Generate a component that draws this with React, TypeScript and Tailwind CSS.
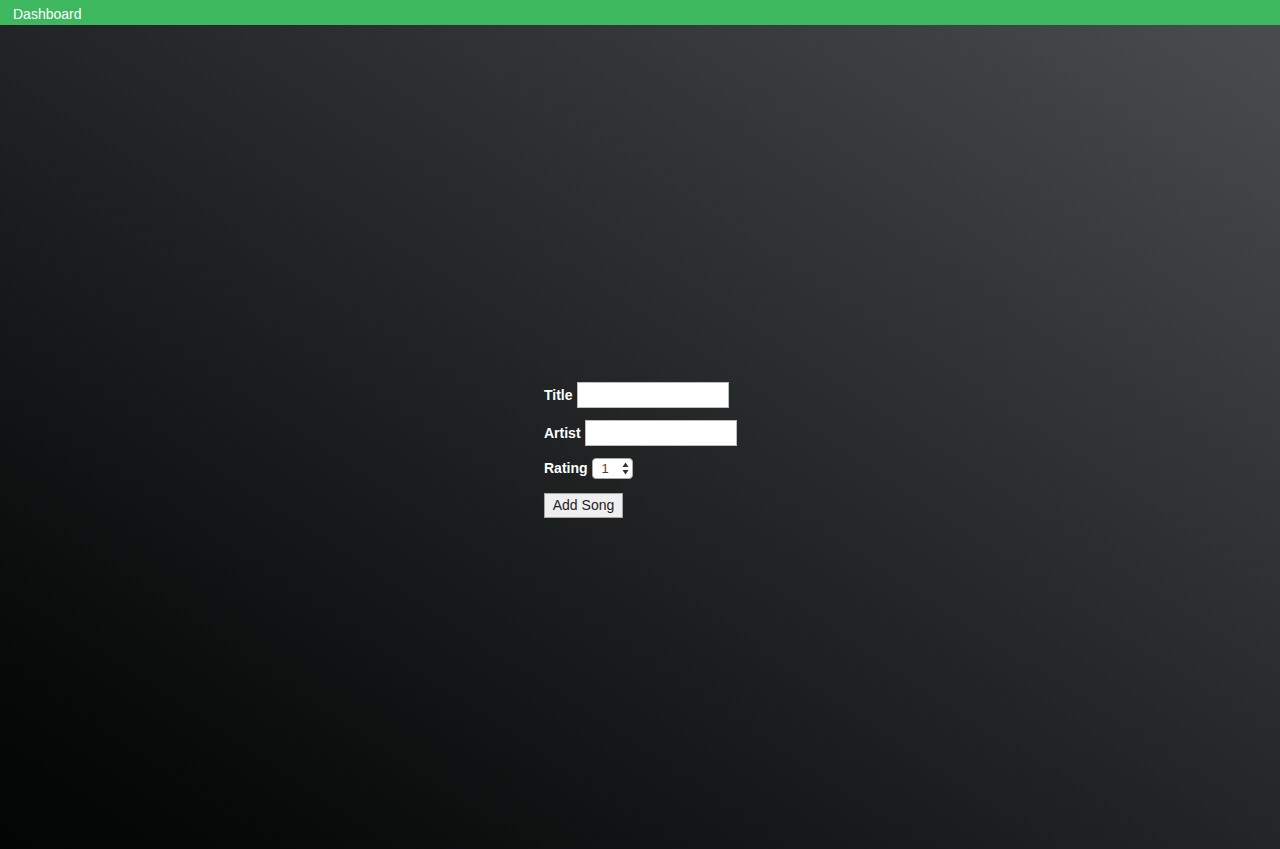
import { useState } from "react";

const App = () => {
  const [title, setTitle] = useState("");
  const [artist, setArtist] = useState("");
  const [rating, setRating] = useState("1");

  return (
    <div
      className="min-h-screen w-full bg-gradient-to-tr from-[#030404] to-[#4b4e50] text-white"
      style={{ fontFamily: '"Liberation Sans", Arial, sans-serif' }}
    >
      <nav className="h-[25px] bg-[#3db85f] px-[13px] text-[14px] leading-[28px] text-white">
        Dashboard
      </nav>

      <form
        className="mx-auto mt-[357px] flex w-[192px] flex-col"
        onSubmit={(e) => e.preventDefault()}
      >
        <div className="flex h-[26px] items-center gap-[4px]">
          <label className="text-[14px] font-bold">Title</label>
          <input
            value={title}
            onChange={(e) => setTitle(e.target.value)}
            type="text"
            className="h-[26px] w-[152px] border border-[#bdbdbd] bg-white px-1 text-[13px] text-black outline-none"
          />
        </div>
        <div className="mt-[12px] flex h-[26px] items-center gap-[4px]">
          <label className="text-[14px] font-bold">Artist</label>
          <input
            value={artist}
            onChange={(e) => setArtist(e.target.value)}
            type="text"
            className="h-[26px] w-[152px] border border-[#bdbdbd] bg-white px-1 text-[13px] text-black outline-none"
          />
        </div>
        <div className="mt-[12px] flex h-[21px] items-center gap-[4px]">
          <label className="text-[14px] font-bold">Rating</label>
          <div className="relative h-[21px] w-[41px]">
            <select
              value={rating}
              onChange={(e) => setRating(e.target.value)}
              className="block h-[21px] w-[41px] appearance-none rounded-[4px] border border-[#a9a9a9] bg-white pl-[9px] text-[13px] leading-[19px] text-[#6a3a22] outline-none"
            >
              {["1", "2", "3", "4", "5"].map((n) => (
                <option key={n} value={n}>
                  {n}
                </option>
              ))}
            </select>
            <svg
              className="pointer-events-none absolute right-[4px] top-[4px]"
              width="7"
              height="13"
              viewBox="0 0 7 13"
            >
              <path d="M3.5 0.5 L6.5 5 L0.5 5 Z" fill="#333" />
              <path d="M3.5 12.5 L6.5 8 L0.5 8 Z" fill="#333" />
            </svg>
          </div>
        </div>
        <div className="mt-[14px]">
          <button
            type="submit"
            className="block h-[25px] w-[79px] border border-[#a6a6a6] bg-[#efefef] text-[14px] text-[#222]"
          >
            Add Song
          </button>
        </div>
      </form>
    </div>
  );
};

export default App;
